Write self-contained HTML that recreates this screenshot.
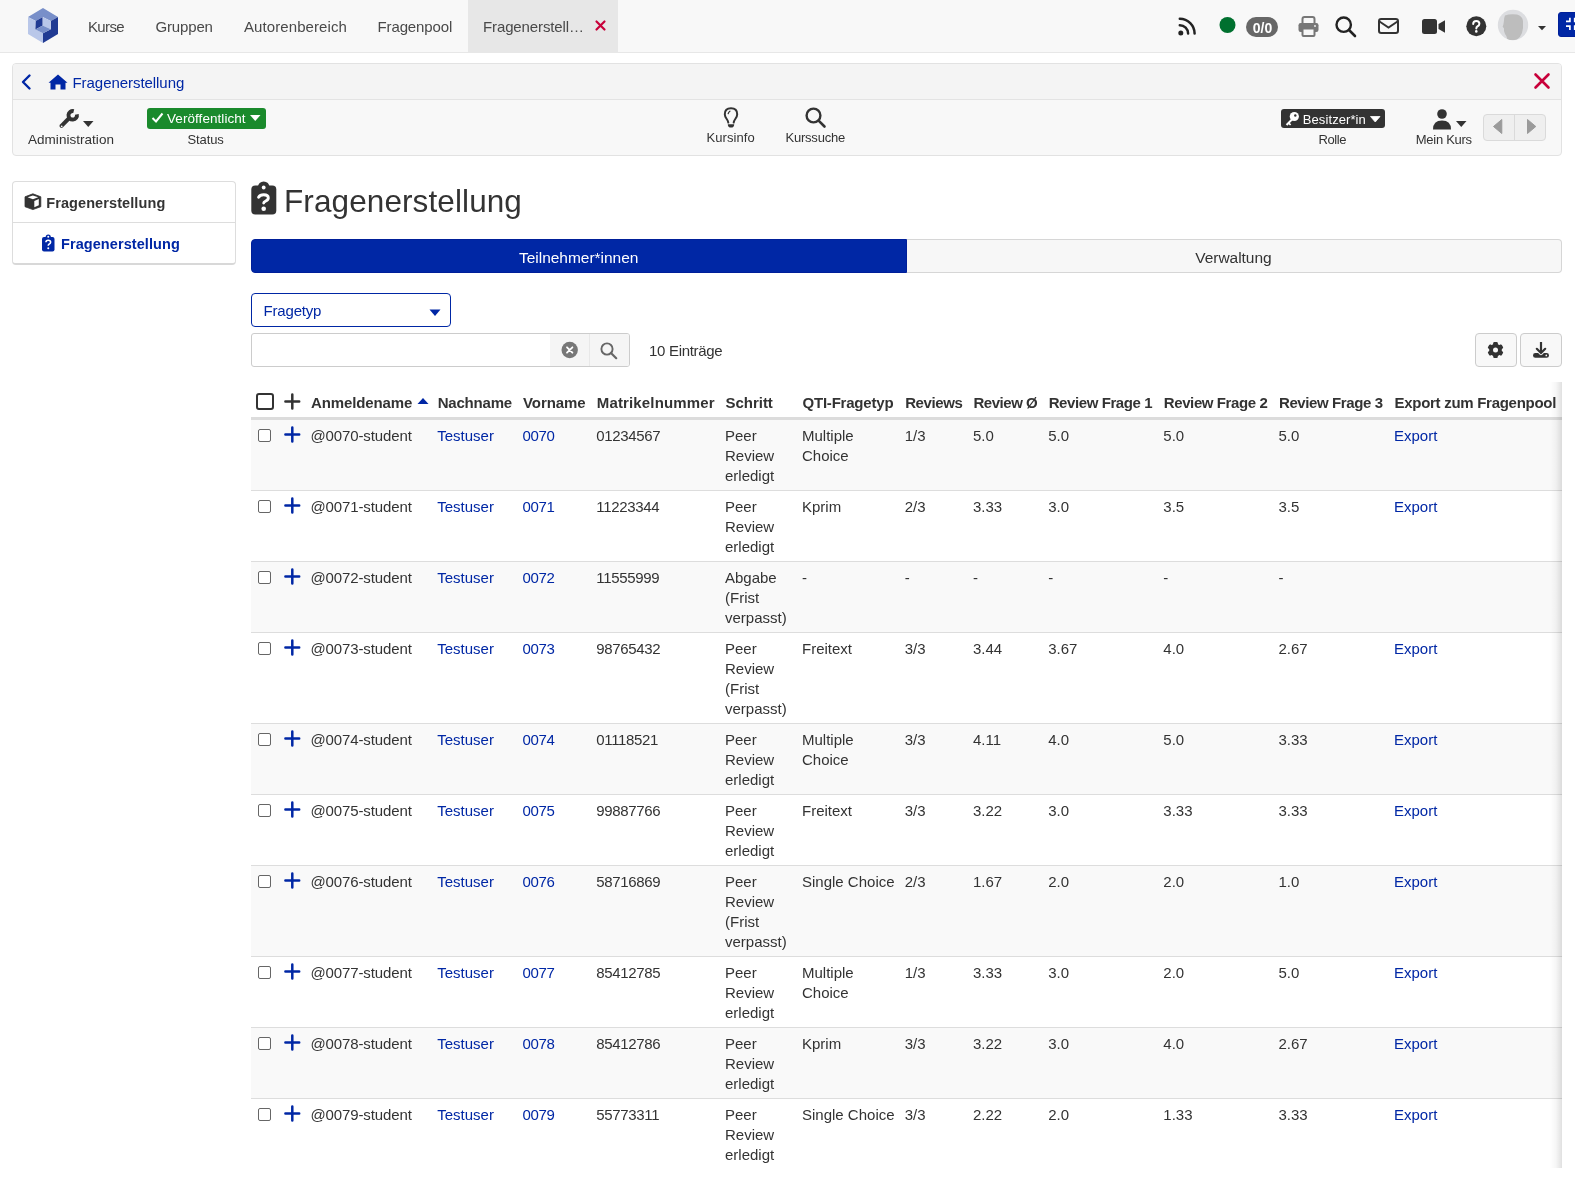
<!DOCTYPE html>
<html><head><meta charset="utf-8"><title>Fragenerstellung</title>
<style>
*{margin:0;padding:0;box-sizing:border-box}
html,body{width:1575px;height:1199px;overflow:hidden;background:#fff}
body{position:relative;font-family:"Liberation Sans",sans-serif;color:#333;font-size:15px;line-height:20px}
.a{position:absolute;white-space:nowrap;line-height:20px}
svg.a{overflow:visible}
#wrap{position:absolute;left:0;top:0;width:1575px;height:1199px;overflow:hidden;background:#fff;will-change:transform}
</style></head><body><div id="wrap">
<div class="a" style="left:0px;top:0px;width:1575px;height:52px;background:#f8f8f8;"></div>
<div class="a" style="left:0px;top:52px;width:1575px;height:1px;background:#e7e7e7;"></div>
<div class="a" style="left:468px;top:0px;width:150px;height:52px;background:#e7e7e7;"></div>
<svg class="a" style="left:26px;top:6px" width="34" height="38" viewBox="0 0 34 38">
<polygon points="2,11 17,2 32,11 24.8,15 16.7,10.9 9.8,15" fill="#788fc9"/>
<polygon points="2,11 9.8,15 9.4,23.6 17,27.3 17,37 2,28" fill="#b9c7e9"/>
<polygon points="32,11 32,28 17,37 17,27.3 24.8,23.2 24.8,15" fill="#213b93"/>
<polygon points="9.8,15 16.7,10.9 16.7,19.6 9.4,23.6" fill="#213b93"/>
<polygon points="16.7,10.9 24.8,15 24.8,23.2 16.7,19.6" fill="#b9c7e9"/>
<polygon points="9.4,23.6 16.7,19.6 24.8,23.2 17,27.3" fill="#788fc9"/>
</svg>
<div class="a" style="left:88px;top:17px;font-size:15px;font-weight:normal;color:#494949;letter-spacing:-0.637px;">Kurse</div>
<div class="a" style="left:155.5px;top:17px;font-size:15px;font-weight:normal;color:#494949;letter-spacing:-0.158px;">Gruppen</div>
<div class="a" style="left:244px;top:17px;font-size:15px;font-weight:normal;color:#494949;letter-spacing:0.085px;">Autorenbereich</div>
<div class="a" style="left:377.5px;top:17px;font-size:15px;font-weight:normal;color:#494949;letter-spacing:-0.122px;">Fragenpool</div>
<div class="a" style="left:483px;top:17px;font-size:15px;font-weight:normal;color:#494949;letter-spacing:-0.123px;">Fragenerstell…</div>
<svg class="a" style="left:595px;top:20px" width="11" height="11" viewBox="0 0 11 11"><path d="M1.5 1.5 L9.5 9.5 M9.5 1.5 L1.5 9.5" stroke="#c8003a" stroke-width="2.2" stroke-linecap="round"/></svg>
<svg class="a" style="left:1177px;top:17px" width="20" height="20" viewBox="0 0 20 20"><circle cx="3.8" cy="16" r="2.5" fill="#222"/><path d="M2.8 8.2 A8.3 8.3 0 0 1 11.1 16.5" stroke="#222" stroke-width="2.5" fill="none" stroke-linecap="round"/><path d="M2.8 1.7 A14.8 14.8 0 0 1 17.6 16.5" stroke="#222" stroke-width="2.5" fill="none" stroke-linecap="round"/></svg>
<svg class="a" style="left:1219px;top:17px" width="17" height="16" viewBox="0 0 17 16"><circle cx="8.5" cy="8" r="8" fill="#00702f"/></svg>
<div class="a" style="left:1246px;top:17px;width:32px;height:20px;background:#676767;border-radius:10px;"></div>
<div class="a" style="left:1251.5px;top:17.5px;font-size:14px;font-weight:bold;color:#fff;width:22px;text-align:center;">0/0</div>
<svg class="a" style="left:1298px;top:16px" width="21" height="21" viewBox="0 0 21 21"><path d="M4.5 7 V3 Q4.5 1 6.5 1 H14.5 Q16.5 1 16.5 3 V7" stroke="#777" stroke-width="2" fill="none"/><rect x="0.5" y="7" width="20" height="9" rx="2.2" fill="#777"/><rect x="4.5" y="12.5" width="12" height="7.5" rx="1" fill="#f8f8f8" stroke="#777" stroke-width="2"/><circle cx="17" cy="10" r="0.9" fill="#f8f8f8"/></svg>
<svg class="a" style="left:1335px;top:16px" width="22" height="21" viewBox="0 0 22 21"><circle cx="8.7" cy="8.7" r="7.2" stroke="#222" stroke-width="2.4" fill="none"/><path d="M14 14 L20 20" stroke="#222" stroke-width="2.6" stroke-linecap="round"/></svg>
<svg class="a" style="left:1378px;top:18px" width="21" height="16" viewBox="0 0 21 16"><rect x="1" y="1" width="19" height="14" rx="2.2" stroke="#333" stroke-width="2" fill="none"/><path d="M1.5 3.5 L10.5 9.5 L19.5 3.5" stroke="#333" stroke-width="2" fill="none"/></svg>
<svg class="a" style="left:1422px;top:19px" width="24" height="15" viewBox="0 0 24 15"><rect x="0" y="0" width="15" height="15" rx="2.5" fill="#333"/><path d="M16.5 5 L23 1.2 V13.8 L16.5 10 Z" fill="#333"/></svg>
<svg class="a" style="left:1466px;top:16px" width="21" height="21" viewBox="0 0 21 21"><circle cx="10.3" cy="10.3" r="10" fill="#333"/><path d="M7.2 8 Q7.2 5 10.3 5 Q13.4 5 13.4 7.8 Q13.4 9.6 11.3 10.5 Q10.3 11 10.3 12.6" stroke="#fff" stroke-width="2" fill="none" stroke-linecap="round"/><circle cx="10.3" cy="15.4" r="1.3" fill="#fff"/></svg>
<svg class="a" style="left:1497px;top:9px" width="32" height="32" viewBox="0 0 32 32"><defs><clipPath id="avc"><circle cx="16" cy="16" r="15.2"/></clipPath></defs><circle cx="16" cy="16" r="15.2" fill="#dcdde0"/><path clip-path="url(#avc)" d="M8 6.5 Q13 4.5 20 5.5 Q25.5 7 26 12 Q26.5 19 25 24 Q23.5 28 20 30.5 Q15 31.8 10.5 30.8 Q10 27 8 25 Q6.5 22 7 19.5 L5.6 17.5 Q6.5 16 6.8 13 Q7 8.5 8 6.5 Z" fill="#bdbdbd"/></svg>
<svg class="a" style="left:1538px;top:26px" width="9" height="5" viewBox="0 0 9 5"><path d="M0 0 H8 L4 4.3 Z" fill="#333"/></svg>
<div class="a" style="left:1558px;top:12px;width:32px;height:25px;background:#0027a5;border:1px solid #001f99;border-radius:3px;"></div>
<svg class="a" style="left:1563px;top:15px" width="14" height="17" viewBox="0 0 14 17"><path d="M3 6.3 H6.9 V2.7 M3 11.1 H6.9 V15 M11.7 2.7 V6.3 H15.6 M11.7 15 V11.1 H15.6" stroke="#fff" stroke-width="1.7" fill="none"/></svg>
<div class="a" style="left:12px;top:63px;width:1550px;height:93px;border:1px solid #e2e2e2;border-radius:4px;background:#f8f8f8;overflow:hidden;"><div style="height:36px;background:#f4f4f4;border-bottom:1px solid #e3e3e3"></div></div>
<svg class="a" style="left:20px;top:74px" width="12" height="16" viewBox="0 0 12 16"><path d="M9.5 1.5 L3 8 L9.5 14.5" stroke="#0027a5" stroke-width="2.4" fill="none" stroke-linecap="round" stroke-linejoin="round"/></svg>
<svg class="a" style="left:48px;top:74px" width="20" height="16" viewBox="0 0 20 16"><path d="M10 0.5 L19.5 8.8 L17.5 8.8 V15.5 H12.5 V10.5 H7.5 V15.5 H2.5 V8.8 H0.5 Z" fill="#0027a5"/></svg>
<div class="a" style="left:72.5px;top:73px;font-size:15px;font-weight:normal;color:#0027a5;letter-spacing:-0.053px;">Fragenerstellung</div>
<svg class="a" style="left:1533px;top:72px" width="18" height="18" viewBox="0 0 18 18"><path d="M2.5 2.5 L15.5 15.5 M15.5 2.5 L2.5 15.5" stroke="#c8003a" stroke-width="2.6" stroke-linecap="round"/></svg>
<svg class="a" style="left:58px;top:108px" width="22" height="22" viewBox="0 0 22 22"><path d="M3.5 17.8 L10.8 10.5" stroke="#333" stroke-width="4" stroke-linecap="round"/><path d="M18.85 6.36 A4.25 4.25 0 1 1 15.75 3.2" stroke="#333" stroke-width="3.9" fill="none"/><circle cx="3.7" cy="18.3" r="0.9" fill="#f8f8f8"/></svg>
<svg class="a" style="left:83px;top:121px" width="11" height="7" viewBox="0 0 11 7"><path d="M0 0 H10.5 L5.25 6 Z" fill="#333"/></svg>
<div class="a" style="left:28px;top:130px;font-size:13.5px;font-weight:normal;color:#333;letter-spacing:0.032px;">Administration</div>
<div class="a" style="left:147px;top:108px;width:119px;height:21px;background:#1a8a2c;border-radius:3px;"></div>
<svg class="a" style="left:151px;top:111px" width="13" height="13" viewBox="0 0 13 13"><path d="M1.5 7 L5 10.5 L11.5 2.5" stroke="#fff" stroke-width="2" fill="none"/></svg>
<div class="a" style="left:167px;top:109.2px;font-size:13.5px;font-weight:normal;color:#fff;letter-spacing:0.062px;">Veröffentlicht</div>
<svg class="a" style="left:250px;top:115px" width="11" height="7" viewBox="0 0 11 7"><path d="M0 0 H10.5 L5.25 6 Z" fill="#fff"/></svg>
<div class="a" style="left:187.5px;top:130px;font-size:13px;font-weight:normal;color:#333;letter-spacing:-0.098px;">Status</div>
<svg class="a" style="left:723px;top:107px" width="16" height="22" viewBox="0 0 16 22"><path d="M5.3 15.6 Q5 13.8 3.7 12 Q1.8 9.4 1.8 7.2 Q1.8 1.2 8 1.2 Q14.2 1.2 14.2 7.2 Q14.2 9.4 12.3 12 Q11 13.8 10.7 15.6" stroke="#333" stroke-width="2" fill="none" stroke-linecap="round"/><path d="M4.8 17.2 H11.2 Q11.2 20.6 8 20.6 Q4.8 20.6 4.8 17.2 Z" fill="#333"/><path d="M5.2 6.6 Q5.6 5 6.9 4.2" stroke="#333" stroke-width="1.3" fill="none" stroke-linecap="round"/></svg>
<div class="a" style="left:706.5px;top:127.5px;font-size:13px;font-weight:normal;color:#333;letter-spacing:0.070px;">Kursinfo</div>
<svg class="a" style="left:805px;top:107px" width="22" height="21" viewBox="0 0 22 21"><circle cx="8.5" cy="8.5" r="6.9" stroke="#333" stroke-width="2.4" fill="none"/><path d="M13.6 13.6 L19.5 19.5" stroke="#333" stroke-width="2.6" stroke-linecap="round"/></svg>
<div class="a" style="left:785.5px;top:127.5px;font-size:13px;font-weight:normal;color:#333;letter-spacing:-0.220px;">Kurssuche</div>
<div class="a" style="left:1281px;top:109px;width:104px;height:19px;background:#333;border-radius:3px;"></div>
<svg class="a" style="left:1284px;top:111px" width="16" height="16" viewBox="0 0 16 16"><circle cx="10.3" cy="5.5" r="4.6" fill="#fff"/><path d="M7.5 7.5 L1.8 13.2 L3.3 14.7 L4.7 13.3 L6 14.6 L7.2 13.4 L5.9 12.1 L9.2 8.8 Z" fill="#fff"/><circle cx="11.3" cy="4.5" r="1.2" fill="#333"/></svg>
<div class="a" style="left:1302.8px;top:109.5px;font-size:13px;font-weight:normal;color:#fff;letter-spacing:0.086px;">Besitzer*in</div>
<svg class="a" style="left:1370px;top:116px" width="11" height="7" viewBox="0 0 11 7"><path d="M0.5 0.5 H10 L5.25 6 Z" fill="#fff" stroke="#fff" stroke-width="0.8" stroke-linejoin="round"/></svg>
<div class="a" style="left:1318.5px;top:129.5px;font-size:13px;font-weight:normal;color:#333;letter-spacing:-0.385px;">Rolle</div>
<svg class="a" style="left:1432px;top:109px" width="20" height="21" viewBox="0 0 20 21"><circle cx="10" cy="5" r="4.8" fill="#333"/><path d="M1 20.5 Q1 11.5 10 11.5 Q19 11.5 19 20.5 Z" fill="#333"/></svg>
<svg class="a" style="left:1456px;top:121px" width="11" height="7" viewBox="0 0 11 7"><path d="M0 0 H10.5 L5.25 6 Z" fill="#333"/></svg>
<div class="a" style="left:1415.8px;top:129.5px;font-size:13px;font-weight:normal;color:#333;letter-spacing:-0.287px;">Mein Kurs</div>
<div class="a" style="left:1483px;top:114px;width:63px;height:27px;border:1px solid #dadada;border-radius:4px;background:#efefef;"></div>
<div class="a" style="left:1514px;top:115px;width:1px;height:25px;background:#dadada;"></div>
<svg class="a" style="left:1492px;top:118px" width="11" height="17" viewBox="0 0 11 17"><path d="M9.8 1.5 V15.5 L1.5 8.5 Z" fill="#9a9a9a" stroke="#9a9a9a" stroke-width="1" stroke-linejoin="round"/></svg>
<svg class="a" style="left:1526px;top:118px" width="11" height="17" viewBox="0 0 11 17"><path d="M1.5 1.5 V15.5 L9.8 8.5 Z" fill="#9a9a9a" stroke="#9a9a9a" stroke-width="1" stroke-linejoin="round"/></svg>
<div class="a" style="left:12px;top:181px;width:224px;height:84px;border:1px solid #ddd;border-bottom:2px solid #d8d8d8;border-radius:4px;background:#fff;"></div>
<div class="a" style="left:13px;top:222px;width:222px;height:1px;background:#ddd;"></div>
<svg class="a" style="left:24px;top:193px" width="18" height="18" viewBox="0 0 18 18"><polygon points="8.9,0.8 16.8,3.8 16.8,13.7 8.9,16.6 1,13.7 1,3.8" fill="#333" stroke="#333" stroke-width="0.8" stroke-linejoin="round"/><polygon points="3.6,4.2 8.9,2.5 14.2,4.2 8.9,6.3" fill="#fff"/><polygon points="10.3,7.9 14.8,6.0 14.8,12.3 10.3,14.2" fill="#fff"/></svg>
<div class="a" style="left:46.2px;top:193.3px;font-size:14.5px;font-weight:bold;color:#333;letter-spacing:0.094px;">Fragenerstellung</div>
<svg class="a" style="left:41px;top:234px" width="14" height="18" viewBox="0 0 14 18"><rect x="1" y="3" width="12.5" height="14.5" rx="2" fill="#0027a5"/><circle cx="7.25" cy="3" r="2.6" fill="#0027a5"/><circle cx="7.25" cy="2.8" r="1" fill="#fff"/><path d="M4.9 8.3 Q4.9 6.2 7.25 6.2 Q9.6 6.2 9.6 8.2 Q9.6 9.5 8 10.2 Q7.25 10.6 7.25 11.8" stroke="#fff" stroke-width="1.6" fill="none"/><circle cx="7.25" cy="14.2" r="1" fill="#fff"/></svg>
<div class="a" style="left:61px;top:234.3px;font-size:14.5px;font-weight:bold;color:#0027a5;letter-spacing:0.074px;">Fragenerstellung</div>
<svg class="a" style="left:251px;top:180px" width="26" height="36" viewBox="0 0 26 36"><rect x="0.3" y="5.4" width="25" height="29.2" rx="4" fill="#333"/><circle cx="12.7" cy="7.2" r="5.8" fill="#333"/><circle cx="12.7" cy="7.5" r="1.9" fill="#fff"/><path d="M7.6 17.3 Q9 14.8 12.7 14.8 Q17.3 14.8 17.3 18 Q17.3 19.8 14.8 21 Q12.7 22 12.7 23" stroke="#fff" stroke-width="2.9" fill="none" stroke-linecap="round"/><circle cx="12.7" cy="28.75" r="2.3" fill="#fff"/></svg>
<div class="a" style="left:284px;top:180.5px;font-size:31.5px;line-height:40px;color:#333;letter-spacing:0.1px">Fragenerstellung</div>
<div class="a" style="left:251px;top:239px;width:656px;height:34px;background:#0027a5;border:1px solid #001f99;border-radius:4px 0 0 4px;"></div>
<div class="a" style="left:907px;top:239px;width:655px;height:34px;background:#f7f7f7;border:1px solid #d6d6d6;border-left:none;border-radius:0 4px 4px 0;"></div>
<div class="a" style="left:519px;top:247.5px;font-size:15.5px;font-weight:normal;color:#fff;letter-spacing:-0.028px;">Teilnehmer*innen</div>
<div class="a" style="left:1195.3px;top:247.5px;font-size:15.5px;font-weight:normal;color:#333;letter-spacing:-0.036px;">Verwaltung</div>
<div class="a" style="left:251px;top:293px;width:200px;height:34px;border:1.5px solid #0027a5;border-radius:4px;background:#fff;"></div>
<div class="a" style="left:263.5px;top:301px;font-size:15px;font-weight:normal;color:#0027a5;letter-spacing:-0.179px;">Fragetyp</div>
<svg class="a" style="left:429px;top:309px" width="12" height="8" viewBox="0 0 12 8"><path d="M0.5 0.5 H11.5 L6 7 Z" fill="#0027a5"/></svg>
<div class="a" style="left:251px;top:333px;width:379px;height:34px;border:1px solid #ccc;border-radius:3px;background:#fff;overflow:hidden;"><div style="position:absolute;left:298px;top:0;width:80px;height:32px;background:#f5f5f5;"></div><div style="position:absolute;left:337px;top:0;width:1px;height:32px;background:#e8e8e8;"></div></div>
<svg class="a" style="left:561px;top:341px" width="18" height="18" viewBox="0 0 18 18"><circle cx="8.7" cy="9" r="8.2" fill="#777"/><path d="M6 6.3 L11.4 11.7 M11.4 6.3 L6 11.7" stroke="#fff" stroke-width="1.8" stroke-linecap="round"/></svg>
<svg class="a" style="left:600px;top:342px" width="18" height="18" viewBox="0 0 18 18"><circle cx="7" cy="7" r="5.6" stroke="#666" stroke-width="1.9" fill="none"/><path d="M11 11 L16.2 16.2" stroke="#666" stroke-width="2.2" stroke-linecap="round"/></svg>
<div class="a" style="left:649px;top:340.8px;font-size:15px;font-weight:normal;color:#333;letter-spacing:-0.305px;">10 Einträge</div>
<div class="a" style="left:1475px;top:333px;width:42px;height:34px;border:1px solid #ccc;border-radius:4px;background:#f8f8f8;"></div>
<div class="a" style="left:1520px;top:333px;width:42px;height:34px;border:1px solid #ccc;border-radius:4px;background:#f8f8f8;"></div>
<svg class="a" style="left:1486px;top:341px" width="19" height="19" viewBox="0 0 19 19"><circle cx="9.5" cy="9" r="6.3" fill="#333"/><rect x="-2.3" y="-8" width="4.6" height="5" rx="1.2" fill="#333" transform="translate(9.5 9) rotate(0)"/><rect x="-2.3" y="-8" width="4.6" height="5" rx="1.2" fill="#333" transform="translate(9.5 9) rotate(60)"/><rect x="-2.3" y="-8" width="4.6" height="5" rx="1.2" fill="#333" transform="translate(9.5 9) rotate(120)"/><rect x="-2.3" y="-8" width="4.6" height="5" rx="1.2" fill="#333" transform="translate(9.5 9) rotate(180)"/><rect x="-2.3" y="-8" width="4.6" height="5" rx="1.2" fill="#333" transform="translate(9.5 9) rotate(240)"/><rect x="-2.3" y="-8" width="4.6" height="5" rx="1.2" fill="#333" transform="translate(9.5 9) rotate(300)"/><circle cx="9.5" cy="9" r="2.5" fill="#f8f8f8"/></svg>
<svg class="a" style="left:1532px;top:341px" width="18" height="18" viewBox="0 0 18 18"><rect x="1" y="12" width="16" height="4.8" rx="2.4" fill="#333"/><path d="M4.5 7.6 L9 12.1 L13.5 7.6" stroke="#f8f8f8" stroke-width="4" fill="none" stroke-linejoin="round"/><path d="M9 1 V11.5" stroke="#333" stroke-width="2.2"/><path d="M4.8 7.8 L9 12 L13.2 7.8" stroke="#333" stroke-width="2.2" fill="none" stroke-linecap="round"/><circle cx="14.3" cy="14.4" r="0.85" fill="#f8f8f8"/></svg>
<div class="a" style="left:311.0px;top:393px;font-size:15px;font-weight:bold;color:#333;letter-spacing:-0.130px;">Anmeldename</div>
<div class="a" style="left:437.7px;top:393px;font-size:15px;font-weight:bold;color:#333;letter-spacing:-0.200px;">Nachname</div>
<div class="a" style="left:523.0px;top:393px;font-size:15px;font-weight:bold;color:#333;letter-spacing:-0.075px;">Vorname</div>
<div class="a" style="left:596.8px;top:393px;font-size:15px;font-weight:bold;color:#333;letter-spacing:0.146px;">Matrikelnummer</div>
<div class="a" style="left:725.5px;top:393px;font-size:15px;font-weight:bold;color:#333;letter-spacing:-0.025px;">Schritt</div>
<div class="a" style="left:802.5px;top:393px;font-size:15px;font-weight:bold;color:#333;letter-spacing:-0.209px;">QTI-Fragetyp</div>
<div class="a" style="left:905.2px;top:393px;font-size:15px;font-weight:bold;color:#333;letter-spacing:-0.417px;">Reviews</div>
<div class="a" style="left:973.5px;top:393px;font-size:15px;font-weight:bold;color:#333;letter-spacing:-0.471px;">Review Ø</div>
<div class="a" style="left:1048.7px;top:393px;font-size:15px;font-weight:bold;color:#333;letter-spacing:-0.415px;">Review Frage 1</div>
<div class="a" style="left:1163.8px;top:393px;font-size:15px;font-weight:bold;color:#333;letter-spacing:-0.400px;">Review Frage 2</div>
<div class="a" style="left:1279.0px;top:393px;font-size:15px;font-weight:bold;color:#333;letter-spacing:-0.400px;">Review Frage 3</div>
<div class="a" style="left:1394.5px;top:393px;font-size:15px;font-weight:bold;color:#333;letter-spacing:-0.283px;">Export zum Fragenpool</div>
<div class="a" style="left:256px;top:393px;width:18px;height:17px;border:2px solid #333;border-radius:3px;"></div>
<svg class="a" style="left:284px;top:393px" width="17" height="17" viewBox="0 0 17 17"><path d="M8.3 1.6 V15.4 M1.4 8.5 H15.2" stroke="#333" stroke-width="2.5" stroke-linecap="round"/></svg>
<svg class="a" style="left:417px;top:397px" width="12" height="8" viewBox="0 0 12 8"><path d="M0.5 7 L6 1 L11.5 7 Z" fill="#0027a5"/></svg>
<div class="a" style="left:251px;top:417px;width:1311px;height:3px;background:#dcdcdc;"></div>
<div class="a" style="left:251px;top:420px;width:1311px;height:70px;background:#f9f9f9;"></div>
<div class="a" style="left:251px;top:490px;width:1311px;height:1px;background:#dddddd;"></div>
<div class="a" style="left:258px;top:429px;width:13px;height:13px;border:1px solid #666;border-radius:2px;background:#fff;"></div>
<svg class="a" style="left:284px;top:426px" width="17" height="17" viewBox="0 0 17 17"><path d="M8.3 1.6 V15.4 M1.4 8.5 H15.2" stroke="#0027a5" stroke-width="2.5" stroke-linecap="round"/></svg>
<div class="a" style="left:310.5px;top:426px;font-size:15px;font-weight:normal;color:#333;letter-spacing:-0.12px;">@0070-student</div>
<div class="a" style="left:437.2px;top:426px;font-size:15px;font-weight:normal;color:#0027a5;">Testuser</div>
<div class="a" style="left:522.5px;top:426px;font-size:15px;font-weight:normal;color:#0027a5;letter-spacing:-0.35px;">0070</div>
<div class="a" style="left:596.3px;top:426px;font-size:15px;font-weight:normal;color:#333;letter-spacing:-0.35px;">01234567</div>
<div class="a" style="left:725px;top:426px;font-size:15px;font-weight:normal;color:#333;">Peer</div>
<div class="a" style="left:725px;top:446px;font-size:15px;font-weight:normal;color:#333;">Review</div>
<div class="a" style="left:725px;top:466px;font-size:15px;font-weight:normal;color:#333;">erledigt</div>
<div class="a" style="left:802px;top:426px;font-size:15px;font-weight:normal;color:#333;">Multiple</div>
<div class="a" style="left:802px;top:446px;font-size:15px;font-weight:normal;color:#333;">Choice</div>
<div class="a" style="left:904.7px;top:426px;font-size:15px;font-weight:normal;color:#333;">1/3</div>
<div class="a" style="left:973px;top:426px;font-size:15px;font-weight:normal;color:#333;">5.0</div>
<div class="a" style="left:1048.2px;top:426px;font-size:15px;font-weight:normal;color:#333;">5.0</div>
<div class="a" style="left:1163.3px;top:426px;font-size:15px;font-weight:normal;color:#333;">5.0</div>
<div class="a" style="left:1278.5px;top:426px;font-size:15px;font-weight:normal;color:#333;">5.0</div>
<div class="a" style="left:1394px;top:426px;font-size:15px;font-weight:normal;color:#0027a5;">Export</div>
<div class="a" style="left:251px;top:491px;width:1311px;height:70px;background:#fff;"></div>
<div class="a" style="left:251px;top:561px;width:1311px;height:1px;background:#dddddd;"></div>
<div class="a" style="left:258px;top:500px;width:13px;height:13px;border:1px solid #666;border-radius:2px;background:#fff;"></div>
<svg class="a" style="left:284px;top:497px" width="17" height="17" viewBox="0 0 17 17"><path d="M8.3 1.6 V15.4 M1.4 8.5 H15.2" stroke="#0027a5" stroke-width="2.5" stroke-linecap="round"/></svg>
<div class="a" style="left:310.5px;top:497px;font-size:15px;font-weight:normal;color:#333;letter-spacing:-0.12px;">@0071-student</div>
<div class="a" style="left:437.2px;top:497px;font-size:15px;font-weight:normal;color:#0027a5;">Testuser</div>
<div class="a" style="left:522.5px;top:497px;font-size:15px;font-weight:normal;color:#0027a5;letter-spacing:-0.35px;">0071</div>
<div class="a" style="left:596.3px;top:497px;font-size:15px;font-weight:normal;color:#333;letter-spacing:-0.35px;">11223344</div>
<div class="a" style="left:725px;top:497px;font-size:15px;font-weight:normal;color:#333;">Peer</div>
<div class="a" style="left:725px;top:517px;font-size:15px;font-weight:normal;color:#333;">Review</div>
<div class="a" style="left:725px;top:537px;font-size:15px;font-weight:normal;color:#333;">erledigt</div>
<div class="a" style="left:802px;top:497px;font-size:15px;font-weight:normal;color:#333;">Kprim</div>
<div class="a" style="left:904.7px;top:497px;font-size:15px;font-weight:normal;color:#333;">2/3</div>
<div class="a" style="left:973px;top:497px;font-size:15px;font-weight:normal;color:#333;">3.33</div>
<div class="a" style="left:1048.2px;top:497px;font-size:15px;font-weight:normal;color:#333;">3.0</div>
<div class="a" style="left:1163.3px;top:497px;font-size:15px;font-weight:normal;color:#333;">3.5</div>
<div class="a" style="left:1278.5px;top:497px;font-size:15px;font-weight:normal;color:#333;">3.5</div>
<div class="a" style="left:1394px;top:497px;font-size:15px;font-weight:normal;color:#0027a5;">Export</div>
<div class="a" style="left:251px;top:562px;width:1311px;height:70px;background:#f9f9f9;"></div>
<div class="a" style="left:251px;top:632px;width:1311px;height:1px;background:#dddddd;"></div>
<div class="a" style="left:258px;top:571px;width:13px;height:13px;border:1px solid #666;border-radius:2px;background:#fff;"></div>
<svg class="a" style="left:284px;top:568px" width="17" height="17" viewBox="0 0 17 17"><path d="M8.3 1.6 V15.4 M1.4 8.5 H15.2" stroke="#0027a5" stroke-width="2.5" stroke-linecap="round"/></svg>
<div class="a" style="left:310.5px;top:568px;font-size:15px;font-weight:normal;color:#333;letter-spacing:-0.12px;">@0072-student</div>
<div class="a" style="left:437.2px;top:568px;font-size:15px;font-weight:normal;color:#0027a5;">Testuser</div>
<div class="a" style="left:522.5px;top:568px;font-size:15px;font-weight:normal;color:#0027a5;letter-spacing:-0.35px;">0072</div>
<div class="a" style="left:596.3px;top:568px;font-size:15px;font-weight:normal;color:#333;letter-spacing:-0.35px;">11555999</div>
<div class="a" style="left:725px;top:568px;font-size:15px;font-weight:normal;color:#333;">Abgabe</div>
<div class="a" style="left:725px;top:588px;font-size:15px;font-weight:normal;color:#333;">(Frist</div>
<div class="a" style="left:725px;top:608px;font-size:15px;font-weight:normal;color:#333;">verpasst)</div>
<div class="a" style="left:802px;top:568px;font-size:15px;font-weight:normal;color:#333;">-</div>
<div class="a" style="left:904.7px;top:568px;font-size:15px;font-weight:normal;color:#333;">-</div>
<div class="a" style="left:973px;top:568px;font-size:15px;font-weight:normal;color:#333;">-</div>
<div class="a" style="left:1048.2px;top:568px;font-size:15px;font-weight:normal;color:#333;">-</div>
<div class="a" style="left:1163.3px;top:568px;font-size:15px;font-weight:normal;color:#333;">-</div>
<div class="a" style="left:1278.5px;top:568px;font-size:15px;font-weight:normal;color:#333;">-</div>
<div class="a" style="left:251px;top:633px;width:1311px;height:90px;background:#fff;"></div>
<div class="a" style="left:251px;top:723px;width:1311px;height:1px;background:#dddddd;"></div>
<div class="a" style="left:258px;top:642px;width:13px;height:13px;border:1px solid #666;border-radius:2px;background:#fff;"></div>
<svg class="a" style="left:284px;top:639px" width="17" height="17" viewBox="0 0 17 17"><path d="M8.3 1.6 V15.4 M1.4 8.5 H15.2" stroke="#0027a5" stroke-width="2.5" stroke-linecap="round"/></svg>
<div class="a" style="left:310.5px;top:639px;font-size:15px;font-weight:normal;color:#333;letter-spacing:-0.12px;">@0073-student</div>
<div class="a" style="left:437.2px;top:639px;font-size:15px;font-weight:normal;color:#0027a5;">Testuser</div>
<div class="a" style="left:522.5px;top:639px;font-size:15px;font-weight:normal;color:#0027a5;letter-spacing:-0.35px;">0073</div>
<div class="a" style="left:596.3px;top:639px;font-size:15px;font-weight:normal;color:#333;letter-spacing:-0.35px;">98765432</div>
<div class="a" style="left:725px;top:639px;font-size:15px;font-weight:normal;color:#333;">Peer</div>
<div class="a" style="left:725px;top:659px;font-size:15px;font-weight:normal;color:#333;">Review</div>
<div class="a" style="left:725px;top:679px;font-size:15px;font-weight:normal;color:#333;">(Frist</div>
<div class="a" style="left:725px;top:699px;font-size:15px;font-weight:normal;color:#333;">verpasst)</div>
<div class="a" style="left:802px;top:639px;font-size:15px;font-weight:normal;color:#333;">Freitext</div>
<div class="a" style="left:904.7px;top:639px;font-size:15px;font-weight:normal;color:#333;">3/3</div>
<div class="a" style="left:973px;top:639px;font-size:15px;font-weight:normal;color:#333;">3.44</div>
<div class="a" style="left:1048.2px;top:639px;font-size:15px;font-weight:normal;color:#333;">3.67</div>
<div class="a" style="left:1163.3px;top:639px;font-size:15px;font-weight:normal;color:#333;">4.0</div>
<div class="a" style="left:1278.5px;top:639px;font-size:15px;font-weight:normal;color:#333;">2.67</div>
<div class="a" style="left:1394px;top:639px;font-size:15px;font-weight:normal;color:#0027a5;">Export</div>
<div class="a" style="left:251px;top:724px;width:1311px;height:70px;background:#f9f9f9;"></div>
<div class="a" style="left:251px;top:794px;width:1311px;height:1px;background:#dddddd;"></div>
<div class="a" style="left:258px;top:733px;width:13px;height:13px;border:1px solid #666;border-radius:2px;background:#fff;"></div>
<svg class="a" style="left:284px;top:730px" width="17" height="17" viewBox="0 0 17 17"><path d="M8.3 1.6 V15.4 M1.4 8.5 H15.2" stroke="#0027a5" stroke-width="2.5" stroke-linecap="round"/></svg>
<div class="a" style="left:310.5px;top:730px;font-size:15px;font-weight:normal;color:#333;letter-spacing:-0.12px;">@0074-student</div>
<div class="a" style="left:437.2px;top:730px;font-size:15px;font-weight:normal;color:#0027a5;">Testuser</div>
<div class="a" style="left:522.5px;top:730px;font-size:15px;font-weight:normal;color:#0027a5;letter-spacing:-0.35px;">0074</div>
<div class="a" style="left:596.3px;top:730px;font-size:15px;font-weight:normal;color:#333;letter-spacing:-0.35px;">01118521</div>
<div class="a" style="left:725px;top:730px;font-size:15px;font-weight:normal;color:#333;">Peer</div>
<div class="a" style="left:725px;top:750px;font-size:15px;font-weight:normal;color:#333;">Review</div>
<div class="a" style="left:725px;top:770px;font-size:15px;font-weight:normal;color:#333;">erledigt</div>
<div class="a" style="left:802px;top:730px;font-size:15px;font-weight:normal;color:#333;">Multiple</div>
<div class="a" style="left:802px;top:750px;font-size:15px;font-weight:normal;color:#333;">Choice</div>
<div class="a" style="left:904.7px;top:730px;font-size:15px;font-weight:normal;color:#333;">3/3</div>
<div class="a" style="left:973px;top:730px;font-size:15px;font-weight:normal;color:#333;">4.11</div>
<div class="a" style="left:1048.2px;top:730px;font-size:15px;font-weight:normal;color:#333;">4.0</div>
<div class="a" style="left:1163.3px;top:730px;font-size:15px;font-weight:normal;color:#333;">5.0</div>
<div class="a" style="left:1278.5px;top:730px;font-size:15px;font-weight:normal;color:#333;">3.33</div>
<div class="a" style="left:1394px;top:730px;font-size:15px;font-weight:normal;color:#0027a5;">Export</div>
<div class="a" style="left:251px;top:795px;width:1311px;height:70px;background:#fff;"></div>
<div class="a" style="left:251px;top:865px;width:1311px;height:1px;background:#dddddd;"></div>
<div class="a" style="left:258px;top:804px;width:13px;height:13px;border:1px solid #666;border-radius:2px;background:#fff;"></div>
<svg class="a" style="left:284px;top:801px" width="17" height="17" viewBox="0 0 17 17"><path d="M8.3 1.6 V15.4 M1.4 8.5 H15.2" stroke="#0027a5" stroke-width="2.5" stroke-linecap="round"/></svg>
<div class="a" style="left:310.5px;top:801px;font-size:15px;font-weight:normal;color:#333;letter-spacing:-0.12px;">@0075-student</div>
<div class="a" style="left:437.2px;top:801px;font-size:15px;font-weight:normal;color:#0027a5;">Testuser</div>
<div class="a" style="left:522.5px;top:801px;font-size:15px;font-weight:normal;color:#0027a5;letter-spacing:-0.35px;">0075</div>
<div class="a" style="left:596.3px;top:801px;font-size:15px;font-weight:normal;color:#333;letter-spacing:-0.35px;">99887766</div>
<div class="a" style="left:725px;top:801px;font-size:15px;font-weight:normal;color:#333;">Peer</div>
<div class="a" style="left:725px;top:821px;font-size:15px;font-weight:normal;color:#333;">Review</div>
<div class="a" style="left:725px;top:841px;font-size:15px;font-weight:normal;color:#333;">erledigt</div>
<div class="a" style="left:802px;top:801px;font-size:15px;font-weight:normal;color:#333;">Freitext</div>
<div class="a" style="left:904.7px;top:801px;font-size:15px;font-weight:normal;color:#333;">3/3</div>
<div class="a" style="left:973px;top:801px;font-size:15px;font-weight:normal;color:#333;">3.22</div>
<div class="a" style="left:1048.2px;top:801px;font-size:15px;font-weight:normal;color:#333;">3.0</div>
<div class="a" style="left:1163.3px;top:801px;font-size:15px;font-weight:normal;color:#333;">3.33</div>
<div class="a" style="left:1278.5px;top:801px;font-size:15px;font-weight:normal;color:#333;">3.33</div>
<div class="a" style="left:1394px;top:801px;font-size:15px;font-weight:normal;color:#0027a5;">Export</div>
<div class="a" style="left:251px;top:866px;width:1311px;height:90px;background:#f9f9f9;"></div>
<div class="a" style="left:251px;top:956px;width:1311px;height:1px;background:#dddddd;"></div>
<div class="a" style="left:258px;top:875px;width:13px;height:13px;border:1px solid #666;border-radius:2px;background:#fff;"></div>
<svg class="a" style="left:284px;top:872px" width="17" height="17" viewBox="0 0 17 17"><path d="M8.3 1.6 V15.4 M1.4 8.5 H15.2" stroke="#0027a5" stroke-width="2.5" stroke-linecap="round"/></svg>
<div class="a" style="left:310.5px;top:872px;font-size:15px;font-weight:normal;color:#333;letter-spacing:-0.12px;">@0076-student</div>
<div class="a" style="left:437.2px;top:872px;font-size:15px;font-weight:normal;color:#0027a5;">Testuser</div>
<div class="a" style="left:522.5px;top:872px;font-size:15px;font-weight:normal;color:#0027a5;letter-spacing:-0.35px;">0076</div>
<div class="a" style="left:596.3px;top:872px;font-size:15px;font-weight:normal;color:#333;letter-spacing:-0.35px;">58716869</div>
<div class="a" style="left:725px;top:872px;font-size:15px;font-weight:normal;color:#333;">Peer</div>
<div class="a" style="left:725px;top:892px;font-size:15px;font-weight:normal;color:#333;">Review</div>
<div class="a" style="left:725px;top:912px;font-size:15px;font-weight:normal;color:#333;">(Frist</div>
<div class="a" style="left:725px;top:932px;font-size:15px;font-weight:normal;color:#333;">verpasst)</div>
<div class="a" style="left:802px;top:872px;font-size:15px;font-weight:normal;color:#333;">Single Choice</div>
<div class="a" style="left:904.7px;top:872px;font-size:15px;font-weight:normal;color:#333;">2/3</div>
<div class="a" style="left:973px;top:872px;font-size:15px;font-weight:normal;color:#333;">1.67</div>
<div class="a" style="left:1048.2px;top:872px;font-size:15px;font-weight:normal;color:#333;">2.0</div>
<div class="a" style="left:1163.3px;top:872px;font-size:15px;font-weight:normal;color:#333;">2.0</div>
<div class="a" style="left:1278.5px;top:872px;font-size:15px;font-weight:normal;color:#333;">1.0</div>
<div class="a" style="left:1394px;top:872px;font-size:15px;font-weight:normal;color:#0027a5;">Export</div>
<div class="a" style="left:251px;top:957px;width:1311px;height:70px;background:#fff;"></div>
<div class="a" style="left:251px;top:1027px;width:1311px;height:1px;background:#dddddd;"></div>
<div class="a" style="left:258px;top:966px;width:13px;height:13px;border:1px solid #666;border-radius:2px;background:#fff;"></div>
<svg class="a" style="left:284px;top:963px" width="17" height="17" viewBox="0 0 17 17"><path d="M8.3 1.6 V15.4 M1.4 8.5 H15.2" stroke="#0027a5" stroke-width="2.5" stroke-linecap="round"/></svg>
<div class="a" style="left:310.5px;top:963px;font-size:15px;font-weight:normal;color:#333;letter-spacing:-0.12px;">@0077-student</div>
<div class="a" style="left:437.2px;top:963px;font-size:15px;font-weight:normal;color:#0027a5;">Testuser</div>
<div class="a" style="left:522.5px;top:963px;font-size:15px;font-weight:normal;color:#0027a5;letter-spacing:-0.35px;">0077</div>
<div class="a" style="left:596.3px;top:963px;font-size:15px;font-weight:normal;color:#333;letter-spacing:-0.35px;">85412785</div>
<div class="a" style="left:725px;top:963px;font-size:15px;font-weight:normal;color:#333;">Peer</div>
<div class="a" style="left:725px;top:983px;font-size:15px;font-weight:normal;color:#333;">Review</div>
<div class="a" style="left:725px;top:1003px;font-size:15px;font-weight:normal;color:#333;">erledigt</div>
<div class="a" style="left:802px;top:963px;font-size:15px;font-weight:normal;color:#333;">Multiple</div>
<div class="a" style="left:802px;top:983px;font-size:15px;font-weight:normal;color:#333;">Choice</div>
<div class="a" style="left:904.7px;top:963px;font-size:15px;font-weight:normal;color:#333;">1/3</div>
<div class="a" style="left:973px;top:963px;font-size:15px;font-weight:normal;color:#333;">3.33</div>
<div class="a" style="left:1048.2px;top:963px;font-size:15px;font-weight:normal;color:#333;">3.0</div>
<div class="a" style="left:1163.3px;top:963px;font-size:15px;font-weight:normal;color:#333;">2.0</div>
<div class="a" style="left:1278.5px;top:963px;font-size:15px;font-weight:normal;color:#333;">5.0</div>
<div class="a" style="left:1394px;top:963px;font-size:15px;font-weight:normal;color:#0027a5;">Export</div>
<div class="a" style="left:251px;top:1028px;width:1311px;height:70px;background:#f9f9f9;"></div>
<div class="a" style="left:251px;top:1098px;width:1311px;height:1px;background:#dddddd;"></div>
<div class="a" style="left:258px;top:1037px;width:13px;height:13px;border:1px solid #666;border-radius:2px;background:#fff;"></div>
<svg class="a" style="left:284px;top:1034px" width="17" height="17" viewBox="0 0 17 17"><path d="M8.3 1.6 V15.4 M1.4 8.5 H15.2" stroke="#0027a5" stroke-width="2.5" stroke-linecap="round"/></svg>
<div class="a" style="left:310.5px;top:1034px;font-size:15px;font-weight:normal;color:#333;letter-spacing:-0.12px;">@0078-student</div>
<div class="a" style="left:437.2px;top:1034px;font-size:15px;font-weight:normal;color:#0027a5;">Testuser</div>
<div class="a" style="left:522.5px;top:1034px;font-size:15px;font-weight:normal;color:#0027a5;letter-spacing:-0.35px;">0078</div>
<div class="a" style="left:596.3px;top:1034px;font-size:15px;font-weight:normal;color:#333;letter-spacing:-0.35px;">85412786</div>
<div class="a" style="left:725px;top:1034px;font-size:15px;font-weight:normal;color:#333;">Peer</div>
<div class="a" style="left:725px;top:1054px;font-size:15px;font-weight:normal;color:#333;">Review</div>
<div class="a" style="left:725px;top:1074px;font-size:15px;font-weight:normal;color:#333;">erledigt</div>
<div class="a" style="left:802px;top:1034px;font-size:15px;font-weight:normal;color:#333;">Kprim</div>
<div class="a" style="left:904.7px;top:1034px;font-size:15px;font-weight:normal;color:#333;">3/3</div>
<div class="a" style="left:973px;top:1034px;font-size:15px;font-weight:normal;color:#333;">3.22</div>
<div class="a" style="left:1048.2px;top:1034px;font-size:15px;font-weight:normal;color:#333;">3.0</div>
<div class="a" style="left:1163.3px;top:1034px;font-size:15px;font-weight:normal;color:#333;">4.0</div>
<div class="a" style="left:1278.5px;top:1034px;font-size:15px;font-weight:normal;color:#333;">2.67</div>
<div class="a" style="left:1394px;top:1034px;font-size:15px;font-weight:normal;color:#0027a5;">Export</div>
<div class="a" style="left:251px;top:1099px;width:1311px;height:70px;background:#fff;"></div>
<div class="a" style="left:258px;top:1108px;width:13px;height:13px;border:1px solid #666;border-radius:2px;background:#fff;"></div>
<svg class="a" style="left:284px;top:1105px" width="17" height="17" viewBox="0 0 17 17"><path d="M8.3 1.6 V15.4 M1.4 8.5 H15.2" stroke="#0027a5" stroke-width="2.5" stroke-linecap="round"/></svg>
<div class="a" style="left:310.5px;top:1105px;font-size:15px;font-weight:normal;color:#333;letter-spacing:-0.12px;">@0079-student</div>
<div class="a" style="left:437.2px;top:1105px;font-size:15px;font-weight:normal;color:#0027a5;">Testuser</div>
<div class="a" style="left:522.5px;top:1105px;font-size:15px;font-weight:normal;color:#0027a5;letter-spacing:-0.35px;">0079</div>
<div class="a" style="left:596.3px;top:1105px;font-size:15px;font-weight:normal;color:#333;letter-spacing:-0.35px;">55773311</div>
<div class="a" style="left:725px;top:1105px;font-size:15px;font-weight:normal;color:#333;">Peer</div>
<div class="a" style="left:725px;top:1125px;font-size:15px;font-weight:normal;color:#333;">Review</div>
<div class="a" style="left:725px;top:1145px;font-size:15px;font-weight:normal;color:#333;">erledigt</div>
<div class="a" style="left:802px;top:1105px;font-size:15px;font-weight:normal;color:#333;">Single Choice</div>
<div class="a" style="left:904.7px;top:1105px;font-size:15px;font-weight:normal;color:#333;">3/3</div>
<div class="a" style="left:973px;top:1105px;font-size:15px;font-weight:normal;color:#333;">2.22</div>
<div class="a" style="left:1048.2px;top:1105px;font-size:15px;font-weight:normal;color:#333;">2.0</div>
<div class="a" style="left:1163.3px;top:1105px;font-size:15px;font-weight:normal;color:#333;">1.33</div>
<div class="a" style="left:1278.5px;top:1105px;font-size:15px;font-weight:normal;color:#333;">3.33</div>
<div class="a" style="left:1394px;top:1105px;font-size:15px;font-weight:normal;color:#0027a5;">Export</div>
<div class="a" style="left:1550px;top:382px;width:12px;height:786px;background:linear-gradient(to right, rgba(0,0,0,0), rgba(0,0,0,0.035) 50%, rgba(0,0,0,0.12));"></div>
<div class="a" style="left:1562px;top:382px;width:13px;height:786px;background:#fff;"></div>
</div></body></html>
